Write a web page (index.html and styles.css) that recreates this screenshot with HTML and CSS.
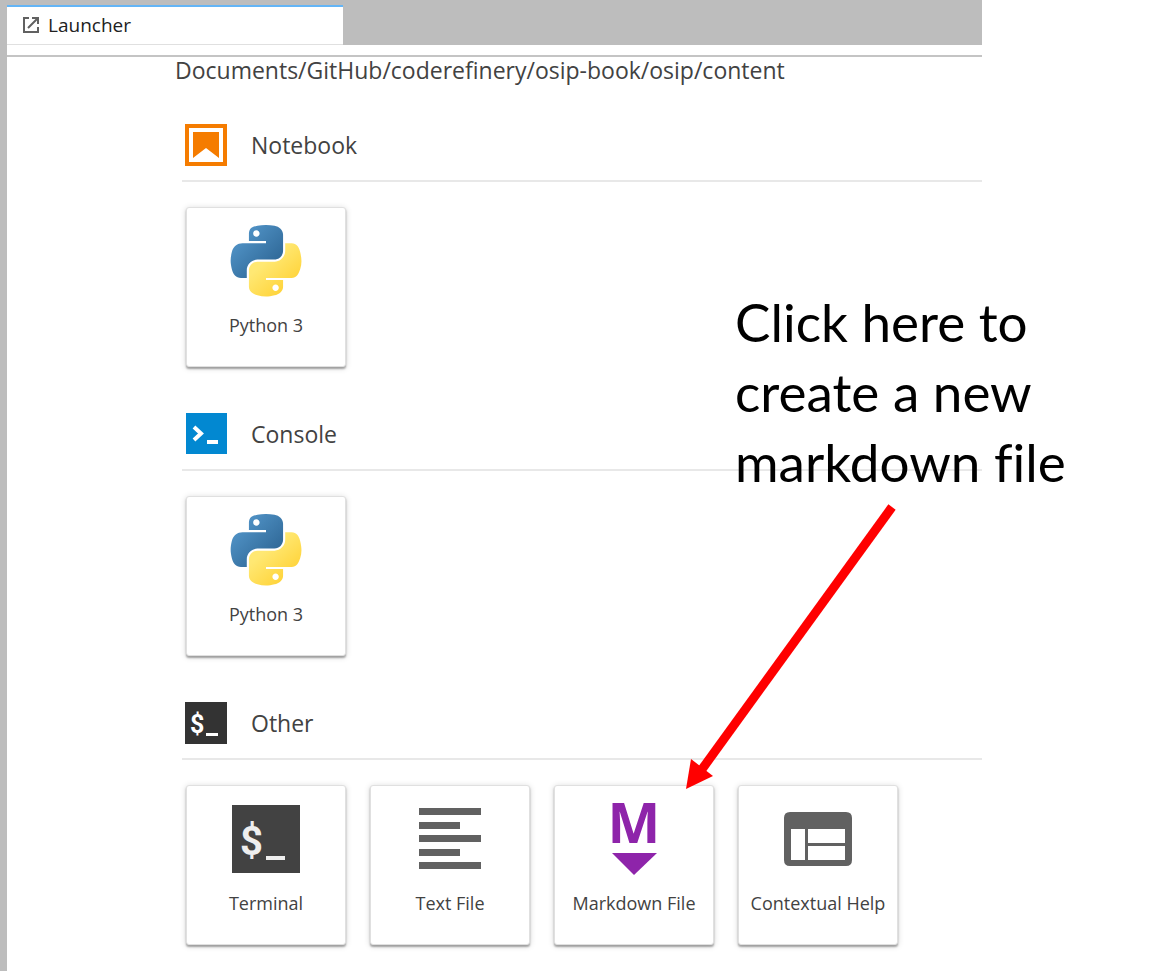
FILE: index.html
```html
<!DOCTYPE html>
<html lang="en">
<head>
<meta charset="utf-8">
<title>Launcher</title>
<link rel="stylesheet" href="styles.css">
</head>
<body>
<svg class="defs" aria-hidden="true">
  <defs>
    <linearGradient id="blue" x1="0" y1="0" x2="1" y2="1">
      <stop offset="0" stop-color="#5a9fd4"/><stop offset="0.8" stop-color="#306998"/>
    </linearGradient>
    <linearGradient id="yellow" x1="0.2" y1="0.2" x2="0.8" y2="0.9">
      <stop offset="0.2" stop-color="#ffe873"/><stop offset="0.9" stop-color="#ffd43b"/>
    </linearGradient>
    <symbol id="python" viewBox="0 0 111 113">
      <path fill="url(#blue)" d="M54.92 0C50.34.02 45.96.41 42.11 1.09 30.76 3.1 28.7 7.29 28.7 15.03v10.22h26.81v3.41H18.64c-7.79 0-14.62 4.68-16.75 13.59-2.46 10.21-2.57 16.59 0 27.25 1.9 7.94 6.46 13.59 14.25 13.59h9.22V70.84c0-8.85 7.65-16.65 16.75-16.65h26.78c7.45 0 13.4-6.14 13.4-13.63V15.03c0-7.26-6.13-12.72-13.4-13.94C64.28.33 59.5-.02 54.92 0zM40.42 8.22c2.77 0 5.03 2.3 5.03 5.12s-2.26 5.1-5.03 5.1-5.03-2.28-5.03-5.1 2.25-5.12 5.03-5.12z"/>
      <path fill="url(#yellow)" d="M85.64 28.66v11.9c0 9.23-7.83 17-16.75 17H42.11c-7.34 0-13.41 6.28-13.41 13.63v25.53c0 7.27 6.32 11.54 13.41 13.62 8.48 2.5 16.62 2.95 26.78 0 6.75-1.95 13.4-5.88 13.4-13.62V86.5H55.51v-3.41H95.7c7.79 0 10.7-5.43 13.41-13.59 2.8-8.4 2.68-16.48 0-27.25-1.93-7.76-5.61-13.59-13.41-13.59zM70.58 93.31c2.78 0 5.03 2.28 5.03 5.1s-2.25 5.12-5.03 5.12-5.04-2.3-5.04-5.12 2.26-5.1 5.04-5.1z"/>
    </symbol>
  </defs>
</svg>

<main class="launcher">
  <div class="tabbar" role="tablist">
    <button class="tab" role="tab" aria-selected="true">
      <svg class="tab-icon" viewBox="0 0 18 18" fill="none" stroke="#616161" stroke-width="2">
        <path d="M7 2H2V16H16V11M10 2H16V8M16 2L6 12"/>
      </svg>
      Launcher
    </button>
  </div>
  <div class="toolbar"></div>

  <div class="content">
    <p class="path">Documents/GitHub/coderefinery/osip-book/osip/content</p>

    <section class="section">
      <header class="section-head">
        <svg class="section-icon" viewBox="0 0 42 42">
          <path fill="none" stroke="#f57c00" stroke-width="4" d="M2 2H40V40H2z"/>
          <path fill="#f57c00" d="M8 8H34V34L21 24L8 34z"/>
        </svg>
        <h2 class="section-title">Notebook</h2>
      </header>
      <div class="cards">
        <button class="card">
          <span class="card-icon"><svg class="icon" aria-hidden="true"><use href="#python"/></svg></span>
          <span class="card-label">Python 3</span>
        </button>
      </div>
    </section>

    <section class="section">
      <header class="section-head">
        <svg class="section-icon" viewBox="0 0 42 42">
          <path fill="#0288d1" d="M1 0H42V41H1z"/>
          <path fill="none" stroke="#fff" stroke-width="4" d="M9 14L16 20.500L9 27M22 29H33"/>
        </svg>
        <h2 class="section-title">Console</h2>
      </header>
      <div class="cards">
        <button class="card">
          <span class="card-icon"><svg class="icon" aria-hidden="true"><use href="#python"/></svg></span>
          <span class="card-label">Python 3</span>
        </button>
      </div>
    </section>

    <section class="section">
      <header class="section-head">
        <svg class="section-icon" viewBox="0 0 42 42">
          <path fill="#333" d="M0 0H42V42H0z"/>
          <text class="dollar" x="5" y="31" font-size="25" fill="#fff">$</text>
          <path fill="#fff" d="M21 31H33V34H21z"/>
        </svg>
        <h2 class="section-title">Other</h2>
      </header>
      <div class="cards">
        <button class="card">
          <span class="card-icon">
            <svg class="icon" viewBox="0 0 72 72">
              <path fill="#424242" d="M2 2H70V70H2z"/>
              <text class="dollar" x="10" y="52" font-size="40" fill="#eee">$</text>
              <path fill="#eee" d="M36 53H55V57H36z"/>
            </svg>
          </span>
          <span class="card-label">Terminal</span>
        </button>
        <button class="card">
          <span class="card-icon">
            <svg class="icon" viewBox="0 0 72 72">
              <path fill="#616161" d="M5 5H67V12H5zM5 19H46V26H5zM5 32H67V39H5zM5 46H46V53H5zM5 59H67V66H5z"/>
            </svg>
          </span>
          <span class="card-label">Text File</span>
        </button>
        <button class="card">
          <span class="card-icon">
            <svg class="icon" viewBox="0 0 72 72">
              <text class="mark" x="36" y="40" font-size="56" text-anchor="middle" fill="#8e24aa">M</text>
              <path fill="#8e24aa" d="M14 50H59L36 72z"/>
            </svg>
          </span>
          <span class="card-label">Markdown File</span>
        </button>
        <button class="card">
          <span class="card-icon">
            <svg class="icon" viewBox="0 0 72 72">
              <path fill="#616161" fill-rule="evenodd" d="M8 9H64Q70 9 70 15V57Q70 63 64 63H8Q2 63 2 57V15Q2 9 8 9zM9 26V57H23V26zM26 26V40H63V26zM26 43V57H63V43z"/>
            </svg>
          </span>
          <span class="card-label">Contextual Help</span>
        </button>
      </div>
    </section>
  </div>
</main>

<aside class="callout">
  <p class="callout-text">Click here to<br>create a new<br>markdown file</p>
  <svg class="arrow" viewBox="0 0 220 290" aria-hidden="true">
    <path stroke="#f00" stroke-width="9" d="M206 3L14 268"/>
    <path fill="#f00" d="M0 285L5 255L27 272z"/>
  </svg>
</aside>
</body>
</html>
```
FILE: styles.css
```css
* {
  box-sizing: border-box;
}

body {
  margin: 0;
  position: relative;
  background: #fff;
  color: #424242;
  font-family: "Open Sans", "Noto Sans", sans-serif;
}

.defs {
  position: absolute;
  width: 0;
  height: 0;
}

.launcher {
  min-height: 100vh;
  margin-right: 175px;
  border-left: 7px solid #bdbdbd;
}

.tabbar {
  display: flex;
  padding-top: 5px;
  background: #bdbdbd;
}

.tab {
  display: flex;
  align-items: center;
  gap: 8px;
  width: 336px;
  height: 40px;
  padding: 0 15px 2px;
  border: 0;
  border-top: 2px solid #64b5f6;
  border-bottom: 1px solid #e0e0e0;
  background: #fff;
  color: #212121;
  font: 19px "Open Sans", "Noto Sans", sans-serif;
}

.tab-icon {
  width: 18px;
  height: 18px;
}

.toolbar {
  height: 12px;
  border-bottom: 2px solid #c4c4c4;
}

.content {
  padding-left: 168px;
}

.path {
  margin: 0 0 41px;
  font-size: 23px;
  line-height: 26px;
}

.section {
  margin: 0 0 46px 7px;
}

.section:last-child {
  margin-bottom: 0;
  padding-bottom: 26px;
}

.section-head {
  display: flex;
  align-items: center;
  gap: 24px;
  padding: 0 3px 14px;
  border-bottom: 2px solid #e8e8e8;
}

.section-icon {
  width: 42px;
  height: 42px;
}

.section-title {
  margin: 0;
  font-size: 23px;
  font-weight: 400;
  line-height: 42px;
}

.cards {
  display: flex;
  gap: 24px;
  padding: 25px 4px 0;
}

.card {
  display: flex;
  flex-direction: column;
  align-items: center;
  width: 160px;
  height: 160px;
  padding: 0;
  border: 1px solid #e0e0e0;
  border-radius: 3px;
  background: #fff;
  box-shadow: 0 2px 2px rgba(0, 0, 0, 0.32), 0 1px 6px rgba(0, 0, 0, 0.16);
  color: #424242;
  font: 18px "Open Sans", "Noto Sans", sans-serif;
}

.card-icon {
  display: flex;
  align-items: center;
  height: 106px;
}

.icon {
  width: 72px;
  height: 72px;
  overflow: visible;
}

.card-label {
  line-height: 22px;
  white-space: nowrap;
}

.dollar {
  font-family: Roboto, sans-serif;
  font-weight: 700;
}

.mark {
  font-family: "Open Sans", sans-serif;
  font-weight: 700;
}

.callout {
  position: absolute;
  top: 287px;
  left: 735px;
  pointer-events: none;
}

.callout-text {
  margin: 0;
  color: #000;
  font-family: Lato, sans-serif;
  font-size: 53px;
  font-variant-ligatures: none;
  line-height: 70px;
  white-space: nowrap;
}

.arrow {
  position: absolute;
  top: 217px;
  left: -49px;
  width: 220px;
  height: 290px;
}
```
